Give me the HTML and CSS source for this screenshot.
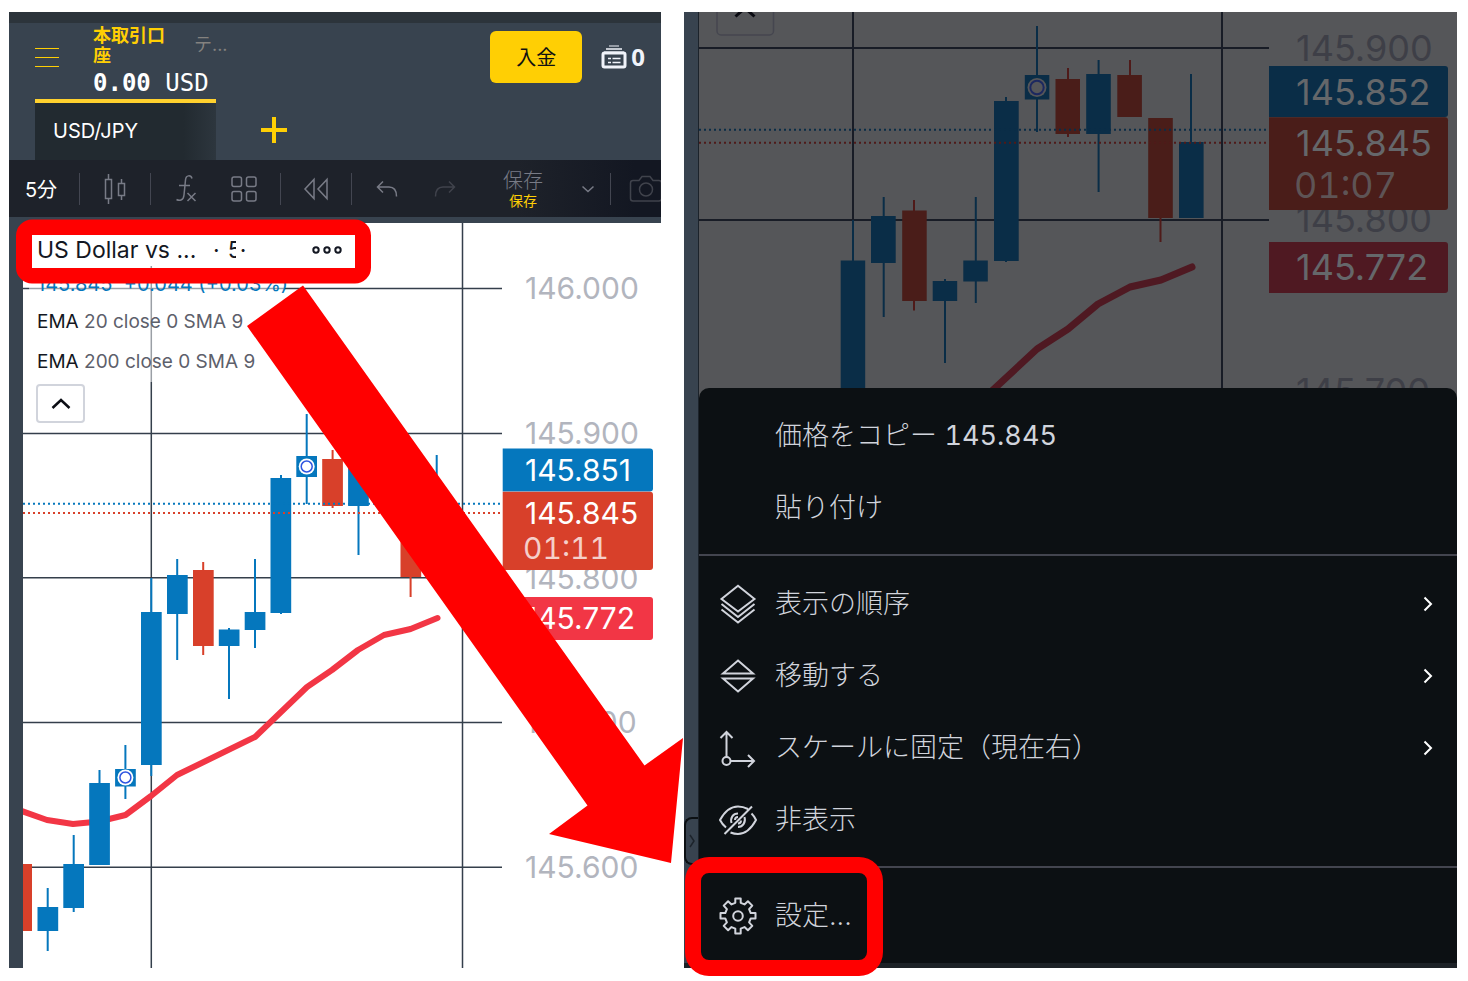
FILE: index.html
```html
<!DOCTYPE html>
<html lang="ja">
<head>
    <meta charset="UTF-8">
    <meta name="viewport" content="width=device-width, initial-scale=1.0">
    <title>USD/JPY チャート設定</title>
    <link rel="stylesheet" href="styles.css">
</head>
<body>

<main class="stage">

    <!-- Trading screen -->
    <section class="panel trade">
        <header class="header">
            <button class="burger" aria-label="メニュー"><span></span><span></span><span></span></button>
            <div class="account">
                <div class="account-tabs">
                    <a class="account-real" href="#">本取引口座</a>
                    <a class="account-demo" href="#">テ...</a>
                </div>
                <div class="balance"><b>0.00</b> USD</div>
            </div>
            <button class="deposit">入金</button>
            <a class="orders" href="#">
                <svg width="26" height="24" viewBox="0 0 26 24" fill="none" stroke="#f0f3fa">
                    <path d="M8 1h10" stroke-width="1"/>
                    <path d="M5 4h16" stroke-width="1.5"/>
                    <rect x="2" y="8" width="22" height="14" rx="1.5" stroke-width="3"/>
                    <path d="M3 7.5h20" stroke-width="2"/>
                    <path d="M7 13.5h3M11.500 13.500h8M7 17.500h3M11.500 17.500h8" stroke-width="1.5"/>
                </svg>
                <span>0</span>
            </a>
        </header>

        <nav class="tabs">
            <a class="tab" href="#">USD/JPY</a>
            <button class="add-tab" aria-label="追加">
                <svg width="28" height="28" viewBox="0 0 28 28" stroke="#ffcf04" stroke-width="4"><path d="M14 1v26M1 14h26"/></svg>
            </button>
        </nav>

        <div class="toolbar">
            <button class="tool interval">5分</button>
            <span class="sep"></span>
            <button class="tool" aria-label="ローソク足">
                <svg width="24" height="32" viewBox="0 0 24 32"><path d="M2.500 6.500h6v19h-6zM5.500 1v5.500M5.500 25.500V31M15.500 10.500h6v12h-6zM18.500 6v4.500M18.500 22.500V27"/></svg>
            </button>
            <span class="sep"></span>
            <button class="tool" aria-label="インジケーター">
                <svg width="24" height="30" viewBox="0 0 24 30"><path d="M18 4.500C17 1 12 .5 11.500 6L10 21c-.5 6-5 6-7.500 4.500M5 11.500h11M13.500 19l8 8M21.500 19l-8 8"/></svg>
            </button>
            <button class="tool narrow" aria-label="レイアウト">
                <svg width="26" height="26" viewBox="0 0 26 26"><rect x="1" y="1" width="9.500" height="9.500" rx="2"/><rect x="15.500" y="1" width="9.500" height="9.500" rx="2"/><rect x="1" y="15.500" width="9.500" height="9.500" rx="2"/><rect x="15.500" y="15.500" width="9.500" height="9.500" rx="2"/></svg>
            </button>
            <span class="sep"></span>
            <button class="tool" aria-label="リプレイ">
                <svg width="26" height="24" viewBox="0 0 26 24"><path d="M11 2.500v19L2 12zM24 2.500v19L15 12z"/></svg>
            </button>
            <span class="sep"></span>
            <button class="tool" aria-label="元に戻す">
                <svg width="22" height="18" viewBox="0 0 22 18"><path d="M7 1.500L1.500 7 7 12.500M1.500 7H13c5 0 7.500 3.500 7.500 9.500"/></svg>
            </button>
            <button class="tool narrow off" aria-label="やり直し">
                <svg width="22" height="18" viewBox="0 0 22 18"><path d="M15 1.500L20.500 7 15 12.500M20.500 7H9C4 7 1.500 10.500 1.500 16.500"/></svg>
            </button>
            <button class="tool save"><span>保存</span><small>保存</small></button>
            <button class="tool arrow" aria-label="保存メニュー">
                <svg width="14" height="8" viewBox="0 0 14 8"><path d="M1.500 1.500L7 6.500l5.500-5"/></svg>
            </button>
            <span class="sep"></span>
            <button class="tool camera off" aria-label="スナップショット">
                <svg width="34" height="28" viewBox="0 0 34 28"><path d="M4 5.500h6l3-4h8l3 4h6c1.500 0 2.500 1 2.500 2.500v15.500c0 1.500-1 2.500-2.500 2.500H4c-1.500 0-2.500-1-2.500-2.500V8c0-1.500 1-2.500 2.500-2.500z"/><circle cx="17" cy="14.500" r="6.500"/></svg>
            </button>
        </div>

        <div class="chart-area">
            <svg class="chart" viewBox="23 223 638 745">
                <path class="grid" d="M151.300 223V968M462.500 223V968M23 288.500H502M23 433.500H502M23 577.700H502M23 722.500H502M23 867.300H502"/>
                <path class="ema" d="M16 809L47 820 73 824 99 821.500 125.500 815 151 796 177 775 255 737 307 687 332 670 358 650 384 635 410.600 629 437.500 618"/>

                <path class="wick up" d="M47.700 888V951M73.700 835V912M99.500 770V865M125.400 745V799M151.300 578V776M177.200 559V660M229 628V699M255 559V648M281 475V614M306.700 414V504M358.500 440V555M436.700 455V576"/>
                <path class="wick down" d="M203.200 562V655M332.600 450V508M410.600 500V597"/>
                <g class="body up">
                    <rect x="37.500" y="907" width="20.700" height="24"/>
                    <rect x="63.300" y="864" width="20.700" height="44"/>
                    <rect x="89.200" y="783" width="20.700" height="82"/>
                    <rect x="115.100" y="769" width="20.700" height="17.500"/>
                    <rect x="141" y="612" width="20.700" height="153"/>
                    <rect x="167" y="575" width="20.700" height="39"/>
                    <rect x="218.800" y="629.500" width="20.700" height="16.500"/>
                    <rect x="244.700" y="612" width="20.700" height="18"/>
                    <rect x="270.500" y="478" width="20.700" height="135"/>
                    <rect x="296.300" y="456" width="20.700" height="21"/>
                    <rect x="348.100" y="455" width="20.700" height="51"/>
                    <rect x="426.300" y="513" width="20.700" height="63"/>
                </g>
                <g class="body down">
                    <rect x="11" y="864" width="21" height="67"/>
                    <rect x="193" y="570" width="20.700" height="76"/>
                    <rect x="322.200" y="459" width="20.700" height="47"/>
                    <rect x="400.500" y="492" width="20.700" height="85"/>
                </g>
                <g class="marker">
                    <circle class="ring" cx="125.400" cy="777.500" r="8"/><circle cx="125.400" cy="777.500" r="5.500"/>
                    <circle class="ring" cx="306.700" cy="466.500" r="8"/><circle cx="306.700" cy="466.500" r="5.500"/>
                </g>
                <path class="dots up" d="M23 503.700H502"/>
                <path class="dots down" d="M23 513H502"/>

                <g class="price">
                    <text x="525" y="299">146.000</text>
                    <text x="525" y="444">145.900</text>
                    <text x="525" y="589">145.800</text>
                    <text x="525" y="733">145.700</text>
                    <text x="525" y="878">145.600</text>
                </g>
                <path class="body up" d="M502.700 448.500H650a3 3 0 0 1 3 3V488.500a3 3 0 0 1-3 3H502.700z"/>
                <path class="body down" d="M502.700 491.700H650a3 3 0 0 1 3 3V567a3 3 0 0 1-3 3H502.700z"/>
                <path class="tag-ema" d="M502.700 597H650a3 3 0 0 1 3 3V637a3 3 0 0 1-3 3H502.700z"/>
                <g class="price on-tag">
                    <text x="525" y="481">145.851</text>
                    <text x="525" y="524">145.845</text>
                    <text class="countdown" x="523" y="559">01:11</text>
                    <text x="525" y="629">145.772</text>
                </g>
            </svg>

            <div class="legend">
                <div class="legend-title">
                    <span class="symbol">US Dollar vs ...</span>
                    <span>·</span><span class="cut">5</span><span>·</span>
                    <button class="more" aria-label="その他">
                        <svg width="30" height="8" viewBox="0 0 30 8" fill="none" stroke="#131722" stroke-width="2"><circle cx="4" cy="4" r="2.700"/><circle cx="15" cy="4" r="2.700"/><circle cx="26" cy="4" r="2.700"/></svg>
                    </button>
                </div>
                <div class="legend-rows">
                    <div class="legend-value">145.845 &nbsp;+0.044 (+0.03%)</div>
                    <div class="legend-ema"><b>EMA</b> 20 close 0 SMA 9</div>
                    <div class="legend-ema"><b>EMA</b> 200 close 0 SMA 9</div>
                </div>
                <button class="collapse" aria-label="折りたたむ">
                    <svg width="20" height="12" viewBox="0 0 20 12" fill="none" stroke="#0c0e15" stroke-width="2.500"><path d="M1.500 10L10 2l8.500 8"/></svg>
                </button>
            </div>
        </div>
    </section>

    <!-- Context menu screen -->
    <section class="panel context">
        <aside class="rail">
            <button class="handle" aria-label="開く">
                <svg width="6" height="14" viewBox="0 0 6 14" fill="none" stroke="#1c232b" stroke-width="1.500"><path d="M1 1l4 6-4 6"/></svg>
            </button>
        </aside>
        <div class="context-main">
            <svg class="chart dimmed" viewBox="699 12 758 376">
                <path class="grid" d="M853 12V400M1222 12V400M699 48H1269M699 220H1269"/>
                <rect x="717" y="-4" width="56.500" height="39" rx="4" fill="none" stroke="#45464f" stroke-width="1.500"/>
                <path d="M735.500 16.500L745 8l9.500 8.500" fill="none" stroke="#0a0b12" stroke-width="3"/>
                <path class="ema" d="M980 402L1037 349 1068 329 1098 304 1130 287 1161 280 1192 267"/>

                <path class="wick up" d="M853 220V400M883.700 197V317M945 279V363M975.800 197V303M1006 97V262M1037 26V132M1098.600 60V192M1191 74V218"/>
                <path class="wick down" d="M914 200V310.500M1068 68V137M1130 60V117M1160.500 118V242"/>
                <g class="body up">
                    <rect x="840.700" y="260.500" width="24.500" height="140"/>
                    <rect x="871" y="216" width="24.700" height="47"/>
                    <rect x="932.700" y="281" width="24.500" height="20"/>
                    <rect x="963.300" y="260.500" width="24.500" height="21"/>
                    <rect x="994" y="101" width="24.700" height="160"/>
                    <rect x="1024.800" y="75" width="24.500" height="24.500"/>
                    <rect x="1086.200" y="74" width="24.600" height="60"/>
                    <rect x="1179" y="142" width="24.600" height="76"/>
                </g>
                <g class="body down">
                    <rect x="902.200" y="210.500" width="24.500" height="90.500"/>
                    <rect x="1055.500" y="79" width="24.500" height="55"/>
                    <rect x="1117.300" y="75" width="24.600" height="42"/>
                    <rect x="1148.200" y="118" width="24.600" height="100"/>
                </g>
                <g class="marker">
                    <circle class="ring" cx="1037" cy="87.500" r="9.500"/><circle cx="1037" cy="87.500" r="6.700"/>
                </g>
                <path class="dots up" d="M699 129.700H1269"/>
                <path class="dots down" d="M699 142.800H1269"/>

                <g class="price">
                    <text x="1296" y="61">145.900</text>
                    <text x="1296" y="232">145.800</text>
                    <text x="1296" y="404">145.700</text>
                </g>
                <path class="body up" d="M1269 66H1445a3 3 0 0 1 3 3V114a3 3 0 0 1-3 3H1269z"/>
                <path class="body down" d="M1269 117.300H1445a3 3 0 0 1 3 3V207a3 3 0 0 1-3 3H1269z"/>
                <path class="tag-ema" d="M1269 242H1445a3 3 0 0 1 3 3V290a3 3 0 0 1-3 3H1269z"/>
                <g class="price on-tag">
                    <text x="1296" y="105">145.852</text>
                    <text x="1296" y="156">145.845</text>
                    <text class="countdown" x="1294" y="198">01:07</text>
                    <text x="1296" y="280">145.772</text>
                </g>
            </svg>

            <div class="menu">
                <div class="menu-group">
                    <button class="menu-item"><span class="icon"></span><span>価格をコピー <span class="num">145.845</span></span></button>
                    <button class="menu-item"><span class="icon"></span>貼り付け</button>
                </div>
                <div class="menu-group">
                    <button class="menu-item">
                        <svg class="icon" viewBox="0 0 38 38"><path d="M19 .8L35.500 14 19 26.500 2.500 14zM2.500 19L19 32l16.500-13M2.500 24.500L19 37.500l16.500-13"/></svg>
                        表示の順序
                        <svg class="next" viewBox="0 0 10 16"><path d="M1.500 1.500L8 8l-6.500 6.500"/></svg>
                    </button>
                    <button class="menu-item">
                        <svg class="icon" viewBox="0 0 38 38"><path d="M19 3.500L34 16.500H4zM19 34.500L34 21.500H4z"/></svg>
                        移動する
                        <svg class="next" viewBox="0 0 10 16"><path d="M1.500 1.500L8 8l-6.500 6.500"/></svg>
                    </button>
                    <button class="menu-item">
                        <svg class="icon" viewBox="0 0 38 38"><circle cx="7.500" cy="32" r="4"/><path d="M7.500 28V3M1.500 9l6-6 6 6M11.500 32H35M29 26l6 6-6 6"/></svg>
                        スケールに固定（現在右）
                        <svg class="next" viewBox="0 0 10 16"><path d="M1.500 1.500L8 8l-6.500 6.500"/></svg>
                    </button>
                    <button class="menu-item">
                        <svg class="icon" viewBox="0 0 38 38"><path d="M7 26.500C3 23 1 19 1 19 7 8 13 5.500 19 5.500c4 0 7 1 10 2.500M32.500 12.500C35.500 15.500 37 19 37 19 31 30 25 33 19 33c-3 0-5-.5-7.500-1.500M33 5.500L5.500 33M12.500 22c-1.500-5 1.500-9.500 6.500-9.500M25.500 16c1.500 5-1.500 10-6.500 10M16 19c0-2 1.500-3 3-3M22 19.500c0 2-1.500 3-3 3"/></svg>
                        非表示
                    </button>
                </div>
                <div class="menu-group">
                    <button class="menu-item">
                        <svg class="icon" viewBox="0 0 38 38"><path d="M16.300 5.800V1.500h5.400V5.800L25.500 7.400L28.900 4.200L33.300 8.600L30.100 12.200L31.700 16H36.500V21.500H31.700L30.100 25.300L33.300 28.900L28.900 33.300L25.500 30.100L21.700 31.700V36.500H16.300V31.700L12.500 30.100L9.100 33.300L4.700 28.900L7.900 25.300L6.300 21.500H1.500V16H6.300L7.900 12.200L4.700 8.600L9.100 4.200L12.500 7.400z" stroke-linejoin="round"/><circle cx="19" cy="19" r="4.800"/></svg>
                        設定...
                    </button>
                </div>
            </div>
        </div>
    </section>

    <!-- Highlight frames and arrow -->
    <svg class="notes" viewBox="0 0 1468 981" fill="#ff0000" fill-rule="evenodd">
        <path d="M32 219.500H355a16 16 0 0 1 16 16V267.500a16 16 0 0 1-16 16H32a16 16 0 0 1-16-16V235.500a16 16 0 0 1 16-16zM32 235V268H355V235z"/>
        <path d="M303 285.500L644.500 765.500 683 738 671 863 549 834 587.500 805.500 247 326z"/>
        <path d="M709 857H859a24 24 0 0 1 24 24V952a24 24 0 0 1-24 24H709a24 24 0 0 1-24-24V881a24 24 0 0 1 24-24zM709 873a8 8 0 0 0-8 8V952a8 8 0 0 0 8 8H859a8 8 0 0 0 8-8V881a8 8 0 0 0-8-8z"/>
    </svg>
</main>

</body>
</html>
```
FILE: styles.css
```css
* {
    box-sizing: border-box;
}
body {
    margin: 0;
    background: #fff;
    font-family: Inter, "Noto Sans CJK JP", sans-serif;
}
button {
    padding: 0;
    border: none;
    background: none;
    font: inherit;
    color: inherit;
    cursor: pointer;
}
a {
    color: inherit;
    text-decoration: none;
}
svg {
    display: block;
    flex-shrink: 0;
}
.stage {
    position: relative;
    display: grid;
    grid-template-columns: 652fr 773fr;
    gap: 23px;
    padding: 12px 11px 13px 9px;
}
.panel {
    min-width: 0;
    overflow: hidden;
}
.notes {
    position: absolute;
    top: 0;
    left: 0;
    width: 100%;
    pointer-events: none;
}

/* header */
.trade {
    background: #38434f;
    border-top: 11px solid #2c343b;
}
.header {
    display: flex;
    align-items: flex-start;
    height: 76px;
    padding: 0 16px 0 26px;
}
.burger {
    display: flex;
    flex-direction: column;
    gap: 8px;
    width: 24px;
    margin-top: 25px;
}
.burger span {
    height: 1px;
    background: #ffcf04;
}
.account {
    flex: 1;
    margin-left: 34px;
}
.account-tabs {
    display: flex;
    gap: 25px;
    padding-top: 3px;
    font-size: 18px;
    line-height: 20px;
}
.account-real {
    width: 76px;
    color: #ffcf04;
    font-weight: 700;
}
.account-demo {
    padding-top: 9px;
    color: #84827f;
}
.balance {
    color: #fff;
    font-family: "DejaVu Sans Mono", monospace;
    font-size: 24px;
    line-height: 34px;
}
.deposit {
    width: 92px;
    height: 52px;
    padding-bottom: 2px;
    margin-top: 8px;
    border-radius: 6px;
    background: #ffcf04;
    color: #111;
    font-size: 20px;
}
.orders {
    display: flex;
    align-items: center;
    gap: 4px;
    margin: 19px 0 0 19px;
    color: #f0f3fa;
    font-family: "Open Sans", sans-serif;
    font-size: 24px;
    font-weight: 700;
    line-height: 30px;
}

/* tabs */
.tabs {
    display: flex;
    height: 61px;
    padding-left: 26px;
}
.tab {
    width: 181px;
    padding-left: 18px;
    border-top: 4px solid #ffd12e;
    background: linear-gradient(to right, #222a30 82%, #2d363e);
    color: #fff;
    font-size: 20px;
    line-height: 56px;
}
.add-tab {
    margin-left: 44px;
}

/* toolbar */
.toolbar {
    display: flex;
    align-items: center;
    height: 57px;
    overflow: hidden;
    background: linear-gradient(to right, #1e222a 78%, #131722 96%);
    color: #787b86;
}
.tool {
    display: flex;
    flex: 0 0 70px;
    align-items: center;
    justify-content: center;
}
.tool svg {
    fill: none;
    stroke: currentColor;
    stroke-width: 1.5;
}
.tool.interval {
    padding-right: 6px;
    color: #fff;
    font-size: 20px;
}
.tool.narrow {
    flex-basis: 46px;
}
.tool.narrow + .sep {
    margin-left: 13px;
}
.tool.off {
    color: #40434c;
}
.tool.save {
    flex-direction: column;
    flex-basis: 110px;
    font-size: 20px;
    font-weight: 300;
    line-height: 24px;
}
.tool.save small {
    color: #ffcf04;
    font-size: 14px;
    font-weight: 400;
    line-height: 16px;
}
.tool.arrow {
    flex-basis: 32px;
    padding-right: 12px;
}
.tool.camera {
    flex-basis: 70px;
}
.sep {
    flex: 0 0 1px;
    height: 32px;
    background: #434651;
}

/* charts */
.chart-area {
    position: relative;
    padding: 6px 0 0 14px;
}
.chart {
    width: 100%;
    background: #fff;
    overflow: hidden;
}
.grid {
    stroke: #343f4b;
    stroke-width: 1.5;
}
.ema {
    fill: none;
    stroke: #f23645;
    stroke-width: 6;
    stroke-linecap: round;
    stroke-linejoin: round;
}
.tag-ema {
    fill: #f23645;
}
.body.up {
    fill: #0577bd;
}
.body.down {
    fill: #d8402a;
}
.wick {
    stroke-width: 2;
}
.wick.up, .dots.up {
    stroke: #0577bd;
}
.wick.down, .dots.down {
    stroke: #d8402a;
}
.dots {
    stroke-width: 2;
    stroke-dasharray: 2 3;
}
.marker circle {
    fill: #fff;
    stroke: #2f55e0;
    stroke-width: 1.5;
}
.marker .ring {
    stroke: none;
}
.price {
    fill: #b2b5be;
    font-size: 30px;
}
.price.on-tag {
    fill: #fff;
}
.price .countdown {
    fill-opacity: 0.75;
    font-variant-numeric: tabular-nums;
}

/* chart behind the menu */
.dimmed {
    background: #555659;
}
.dimmed .grid {
    stroke: #181c26;
    stroke-width: 2;
}
.dimmed .ema {
    stroke: #4f1922;
    stroke-width: 7;
}
.dimmed .tag-ema {
    fill: #4f1922;
}
.dimmed .body.up {
    fill: #0a2d47;
}
.dimmed .body.down {
    fill: #4a1d19;
}
.dimmed .wick.up, .dimmed .dots.up {
    stroke: #0a2d47;
}
.dimmed .wick.down, .dimmed .dots.down {
    stroke: #4f1a19;
}
.dimmed .marker circle {
    fill: #555659;
    stroke: #1c2860;
    stroke-width: 2;
}
.dimmed .marker .ring {
    stroke: none;
}
.dimmed .price {
    fill: #3e3f47;
    font-size: 36px;
}
.dimmed .on-tag {
    fill: #65676a;
}

/* legend */
.legend {
    position: absolute;
    top: 18px;
    left: 20px;
    color: #131722;
}
.legend-title {
    display: flex;
    align-items: center;
    height: 31px;
    padding: 0 0 2px 8px;
    background: #fff;
    font-size: 23px;
}
.symbol {
    width: 176px;
    white-space: nowrap;
}
.cut {
    width: 8px;
    margin: 0 4px 0 8px;
    overflow: hidden;
}
.more {
    margin-left: 66px;
}
.legend-rows {
    width: 256px;
    padding-left: 8px;
    background: rgba(255, 255, 255, 0.5);
    font-size: 19px;
    line-height: 40px;
    white-space: nowrap;
}
.legend-value {
    color: #0577bd;
    font-size: 20px;
    line-height: 36px;
}
.legend-ema {
    color: #5d606b;
}
.legend-ema b {
    color: #131722;
    font-weight: 400;
}
.collapse {
    display: flex;
    align-items: center;
    justify-content: center;
    width: 49px;
    height: 39px;
    margin: 2px 0 0 7px;
    border: 2px solid #d1d4dc;
    border-radius: 4px;
    background: #fff;
}

/* context menu */
.context {
    display: flex;
    border-bottom: 5px solid #1d2227;
    background: #555659;
}
.rail {
    display: flex;
    flex: 0 0 15px;
    flex-direction: column;
    justify-content: flex-end;
    padding-bottom: 98px;
    border-right: 1px solid #1c232b;
    background: #38434f;
}
.handle {
    display: flex;
    align-items: center;
    justify-content: center;
    height: 48px;
    border: 2px solid #0c1013;
    border-right: none;
    border-radius: 8px 0 0 8px;
}
.context-main {
    display: flex;
    flex: 1;
    flex-direction: column;
    min-width: 0;
}
.menu {
    flex: 1;
    border-radius: 10px 10px 0 0;
    background: #0c1013;
    color: #d1d4dc;
}
.menu-group {
    padding: 12px 0 10px;
}
.menu-group + .menu-group {
    border-top: 2px solid #43454f;
}
.menu-item {
    display: flex;
    align-items: center;
    gap: 18px;
    width: 100%;
    height: 72px;
    padding: 0 24px 0 20px;
    font-size: 27px;
    font-weight: 300;
    line-height: 36px;
    text-align: left;
}
.menu-item .num {
    font-weight: 400;
    font-variant-numeric: tabular-nums;
}
.icon {
    flex: 0 0 38px;
    height: 38px;
    fill: none;
    stroke: currentColor;
    stroke-width: 2;
    overflow: visible;
}
.next {
    width: 10px;
    height: 16px;
    margin-left: auto;
    fill: none;
    stroke: #fff;
    stroke-width: 2;
}
```
